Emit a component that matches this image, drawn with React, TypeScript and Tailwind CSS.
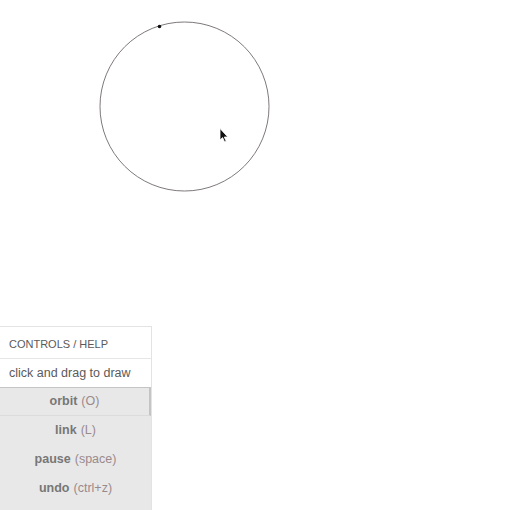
const BUTTONS = [
  { label: "orbit", key: "(O)", active: true },
  { label: "link", key: "(L)" },
  { label: "pause", key: "(space)" },
  { label: "undo", key: "(ctrl+z)" },
];

export default function App() {
  return (
    <div className="h-[510px] w-[510px] overflow-hidden bg-white flex flex-col" style={{ fontFamily: "'Liberation Sans', Arial, sans-serif" }}>
      <div className="h-[326px] shrink-0">
        <svg width="510" height="326" className="block">
          <circle cx="184.5" cy="106.5" r="84.5" fill="none" stroke="#6f6a6c" strokeWidth="0.9" />
          <circle cx="159.5" cy="26.5" r="1.8" fill="#111" />
          <path d="M220 128.5 L220 140 L222.6 137.6 L224.6 142 L226.2 141.3 L224.3 137 L227.8 137 Z" fill="#111" stroke="#fff" strokeWidth="0.8" />
        </svg>
      </div>

      <div className="w-[152px] flex-1 flex flex-col border-t border-r border-[#e3e3e3]">
        <div className="h-[32px] flex items-center pt-[3px] px-[9px] text-[11px] text-[#5a5a5a] border-b border-[#e6e6e6] bg-white">
          CONTROLS / HELP
        </div>
        <div className="h-[28px] flex items-center px-[9px] text-[12.5px] text-[#5a5a5a] bg-white">
          click and drag to draw
        </div>
        <div className="flex-1 bg-[#e8e8e8]">
          {BUTTONS.map((b) => (
            <div
              key={b.label}
              className={`h-[29px] flex items-center justify-center text-[12.5px] ${b.active ? "border-t border-r-2 border-[#c4c4c4] border-b border-b-[#dcdcdc]" : ""}`}
            >
              <span className="font-bold text-[#777]">{b.label}</span>
              <span className="ml-[4px] text-[#9a8a8c]">{b.key}</span>
            </div>
          ))}
        </div>
      </div>
    </div>
  );
}
